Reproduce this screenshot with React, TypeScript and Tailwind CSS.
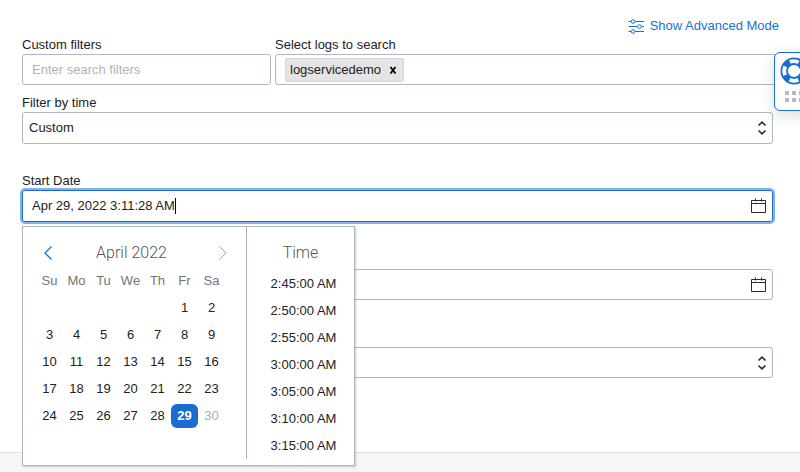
import React, { useState } from "react";

const weekdays = ["Su", "Mo", "Tu", "We", "Th", "Fr", "Sa"];

// April 2022 starts on a Friday
const days: (number | null)[] = [
  null, null, null, null, null,
  ...Array.from({ length: 30 }, (_, i) => i + 1),
];

const times = [
  "2:45:00 AM",
  "2:50:00 AM",
  "2:55:00 AM",
  "3:00:00 AM",
  "3:05:00 AM",
  "3:10:00 AM",
  "3:15:00 AM",
];

function SlidersIcon() {
  return (
    <svg className="h-4 w-4" viewBox="0 0 16 16" fill="none" stroke="currentColor" aria-hidden="true">
      <path d="M0.500 3.500h2.500M7 3.500h9M0.500 8.500h9M13.500 8.500h2.500M0.500 13.500h2.500M7 13.500h9" strokeWidth="1.200" />
      <circle cx="5" cy="3.500" r="1.800" />
      <circle cx="11.500" cy="8.500" r="1.800" />
      <circle cx="5" cy="13.500" r="1.800" />
    </svg>
  );
}

function SortArrows() {
  return (
    <svg className="pointer-events-none absolute top-1/2 right-1.5 h-4 w-2.5 -translate-y-1/2" viewBox="0 0 10 16" fill="none" stroke="#2a2a2a" strokeWidth="1.600" aria-hidden="true">
      <path d="M1.500 5.500L5 2.200l3.500 3.300M1.500 10.500L5 13.800l3.500-3.300" />
    </svg>
  );
}

function CalendarIcon() {
  return (
    <svg className="h-4 w-4" viewBox="0 0 16 16" fill="none" stroke="#2a2a2a" aria-hidden="true">
      <path d="M1.500 2.500h14v12h-14zM1.500 5.500h14M5.500 0.500v3M11.500 0.500v3" />
    </svg>
  );
}

function LifeRing() {
  return (
    <svg className="h-7 w-7 text-[#1a6dd0]" viewBox="0 0 28 28" fill="none" stroke="currentColor" aria-hidden="true">
      <circle cx="14" cy="14" r="12.600" strokeWidth="1.800" />
      <circle cx="14" cy="14" r="7" strokeWidth="1.800" />
      <circle cx="14" cy="14" r="9.800" strokeWidth="5.600" strokeDasharray="6.400 8.994" strokeDashoffset="-4.500" />
    </svg>
  );
}

function HelpWidget() {
  return (
    <button
      type="button"
      aria-label="Help"
      className="absolute top-[52px] right-[-14px] flex h-[59px] w-10 flex-col items-center gap-1.5 rounded-md border border-[#1a6dd0] bg-white pt-1 shadow-[0_4px_16px_rgba(0,0,0,0.14)]"
    >
      <LifeRing />
      <span className="grid grid-cols-3 gap-[3px]">
        {Array.from({ length: 6 }, (_, i) => (
          <span key={i} className="h-1 w-1 bg-[#b4b9c2]" />
        ))}
      </span>
    </button>
  );
}

function Picker({ selected, onSelect }: { selected: number; onSelect: (d: number) => void }) {
  return (
    <div className="absolute top-full left-0 z-10 mt-1 flex h-[240px] w-[333px] border border-[#b0b7c3] bg-white shadow-[1px_1px_2px_rgba(0,0,0,0.2)]">
      <div className="mb-1.5 w-[224px] border-r border-[#a9b0bb] pt-3 pl-[13px]">
        <div className="flex h-7 w-[189px] items-center justify-between">
          <button type="button" aria-label="Previous month" className="pl-2 text-[#1673d1]">
            <svg className="h-4 w-2" viewBox="0 0 8 16" fill="none" stroke="currentColor" strokeWidth="1.300">
              <path d="M7.500 1.500L1 8l6.500 6.500" />
            </svg>
          </button>
          <h2 className="font-[Roboto,sans-serif] text-[16px] leading-6 font-light text-[#555]">April 2022</h2>
          <button type="button" aria-label="Next month" disabled className="-mr-0.5 pl-2 text-[#a5a5a5]">
            <svg className="h-4 w-2" viewBox="0 0 8 16" fill="none" stroke="currentColor">
              <path d="M0.500 1.500L7 8l-6.500 6.500" />
            </svg>
          </button>
        </div>
        <table className="w-[189px] table-fixed border-collapse text-center">
          <thead>
            <tr className="h-[27px] text-[#757575]">
              {weekdays.map((w) => (
                <th key={w} scope="col" className="p-0 font-normal">{w}</th>
              ))}
            </tr>
          </thead>
          <tbody>
            {[0, 1, 2, 3, 4].map((week) => (
              <tr key={week} className="h-[27px]">
                {days.slice(week * 7, week * 7 + 7).map((d, i) => (
                  <td key={i} className="p-0">
                    {d !== null && (
                      <button
                        type="button"
                        disabled={d > 29}
                        onClick={() => onSelect(d)}
                        className={
                          d === selected
                            ? "block h-6 w-full rounded-md bg-[#1a6dd0] font-bold text-white"
                            : d > 29
                              ? "block h-6 w-full text-[#adadad]"
                              : "block h-6 w-full"
                        }
                      >
                        {d}
                      </button>
                    )}
                  </td>
                ))}
              </tr>
            ))}
          </tbody>
        </table>
      </div>
      <div className="flex-1 pt-3">
        <h2 className="flex h-7 items-center justify-center font-[Roboto,sans-serif] text-[16px] leading-6 font-light text-[#555]">Time</h2>
        <ul className="pt-[3px] pl-1.5 text-center">
          {times.map((t) => (
            <li key={t}>
              <button type="button" className="block h-[27px] w-full">{t}</button>
            </li>
          ))}
        </ul>
      </div>
    </div>
  );
}

export default function App() {
  const [day, setDay] = useState(29);
  return (
    <div className="relative flex min-h-screen flex-col overflow-hidden bg-white font-['Liberation_Sans',Arial,sans-serif] text-[13px] leading-4 text-[#222]">
      <main className="pr-[27px] pb-[74px] pl-[22px]">
        <div className="flex justify-end pt-[18px] pb-[3px]">
          <a href="#advanced" className="-mr-1.5 flex items-center gap-1.5 text-[#1673d1]">
            <SlidersIcon />
            Show Advanced Mode
          </a>
        </div>

        <div className="-mr-2 flex gap-1">
          <div className="w-1/3 max-w-[249px]">
            <label htmlFor="filters" className="block">Custom filters</label>
            <input
              id="filters"
              placeholder="Enter search filters"
              className="mt-px block h-[31px] w-full rounded-[3px] border border-[#b0b7c3] px-[9px] placeholder:text-[#b3b3b3]"
            />
          </div>
          <div className="flex-1">
            <label htmlFor="logs" className="block">Select logs to search</label>
            <div className="mt-px flex h-[31px] items-center rounded-[3px] border border-[#b0b7c3] pl-[9px]">
              <span className="flex h-6 items-center gap-1.5 rounded-xs border border-[#d4d6da] bg-[#e4e4e4] px-1">
                logservicedemo
                <button type="button" aria-label="Remove logservicedemo" className="px-0.5 text-black">
                  <svg className="h-2 w-2" viewBox="0 0 8 8" fill="none" stroke="currentColor" strokeWidth="1.800">
                    <path d="M1.500 1l5 6.500M6.500 1l-5 6.500" />
                  </svg>
                </button>
              </span>
              <input id="logs" className="min-w-0 flex-1 px-1 outline-none" />
            </div>
          </div>
        </div>

        <label htmlFor="range" className="mt-2.5 block">Filter by time</label>
        <div className="relative mt-px">
          <select id="range" className="block h-8 w-full appearance-none rounded-[3px] border border-[#b0b7c3] bg-white px-1.5">
            <option>Custom</option>
          </select>
          <SortArrows />
        </div>

        <label htmlFor="start" className="mt-[29px] block">Start Date</label>
        <div className="relative mt-px">
          <div className="flex h-8 items-center rounded-[3px] border border-[#1a6dd0] pr-1.5 pl-[9px] shadow-[0_0_0_2px_#86b1e8]">
            <input
              id="start"
              defaultValue={`Apr ${day}, 2022 3:11:28 AM`}
              key={day}
              className="field-sizing-content outline-none"
            />
            <span className="h-4 w-px bg-black" />
            <button type="button" aria-label="Open start date calendar" className="ml-auto">
              <CalendarIcon />
            </button>
          </div>
          <Picker selected={day} onSelect={setDay} />
        </div>

        <div className="mt-[47px] flex h-[31px] items-center rounded-[3px] border border-[#b0b7c3] pr-1.5 pl-[9px]">
          <input aria-label="End Date" className="min-w-0 flex-1 outline-none" />
          <button type="button" aria-label="Open end date calendar">
            <CalendarIcon />
          </button>
        </div>

        <div className="relative mt-[47px]">
          <select aria-label="Time zone" className="block h-[31px] w-full appearance-none rounded-[3px] border border-[#b0b7c3] bg-white px-1.5" />
          <SortArrows />
        </div>
      </main>
      <footer className="flex-1 border-t border-[#dfe1e4] bg-[#f6f6f6]" />
      <HelpWidget />
    </div>
  );
}
